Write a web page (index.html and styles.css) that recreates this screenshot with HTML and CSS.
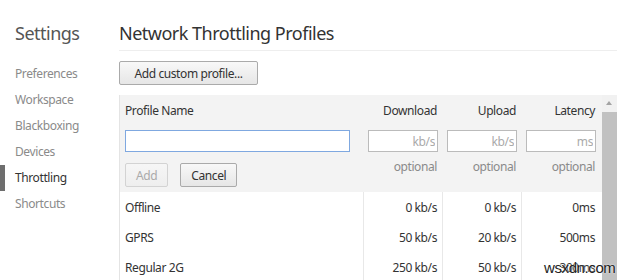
FILE: index.html
```html
<!DOCTYPE html>
<html lang="en">
<head>
  <meta charset="utf-8" />
  <title>Settings - Throttling</title>
  <link rel="stylesheet" href="styles.css">
</head>
<body>
  <div class="page">
    <aside class="sidebar">
      <h1 class="side-title">Settings</h1>
      <ul class="nav">
        <li>Preferences</li>
        <li>Workspace</li>
        <li>Blackboxing</li>
        <li>Devices</li>
        <li class="active">Throttling</li>
        <li>Shortcuts</li>
      </ul>
    </aside>

    <main class="panel">
      <h2 class="panel-title">Network Throttling Profiles</h2>
      <button class="btn add-btn">Add custom profile...</button>

      <div class="list-wrap">
        <div class="list">
          <div class="row head">
            <div class="cell name">Profile Name</div>
            <div class="cell num">Download</div>
            <div class="cell num">Upload</div>
            <div class="cell num">Latency</div>
          </div>

          <div class="editor">
            <div class="row edit-inputs">
              <div class="cell name"><input class="field name-field" type="text"></div>
              <div class="cell num"><input class="field num-field" type="text" placeholder="kb/s"></div>
              <div class="cell num"><input class="field num-field" type="text" placeholder="kb/s"></div>
              <div class="cell num"><input class="field num-field" type="text" placeholder="ms"></div>
            </div>
            <div class="row edit-hints">
              <div class="cell name buttons">
                <button class="btn small" disabled>Add</button>
                <button class="btn small">Cancel</button>
              </div>
              <div class="cell num hint">optional</div>
              <div class="cell num hint">optional</div>
              <div class="cell num hint">optional</div>
            </div>
          </div>

          <div class="row item">
            <div class="cell name">Offline</div>
            <div class="cell num">0 kb/s</div>
            <div class="cell num">0 kb/s</div>
            <div class="cell num">0ms</div>
          </div>
          <div class="row item">
            <div class="cell name">GPRS</div>
            <div class="cell num">50 kb/s</div>
            <div class="cell num">20 kb/s</div>
            <div class="cell num">500ms</div>
          </div>
          <div class="row item">
            <div class="cell name">Regular 2G</div>
            <div class="cell num">250 kb/s</div>
            <div class="cell num">50 kb/s</div>
            <div class="cell num">300ms</div>
          </div>
        </div>

        <div class="scrollbar">
          <div class="arrow"></div>
          <div class="thumb"></div>
        </div>
      </div>
    </main>
  </div>
  <div class="watermark">wsxdn.com</div>
</body>
</html>
```

FILE: styles.css
```css
body {
  margin: 0;
  font-family: "Noto Sans", "Open Sans", sans-serif;
  font-size: 12px;
  letter-spacing: -0.4px;
  color: #333;
  background: #fff;
  height: 280px;
  overflow: hidden;
}

.page {
  display: flex;
  height: 280px;
}

.sidebar {
  width: 119px;
  flex: none;
}

.side-title {
  margin: 0;
  padding: 21px 0 0 15px;
  font-size: 18px;
  font-weight: 400;
  line-height: 24px;
  letter-spacing: -0.5px;
  color: #555;
}

.nav {
  list-style: none;
  margin: 16px 0 0;
  padding: 0;
}

.nav li {
  height: 26px;
  line-height: 26px;
  padding-left: 15px;
  color: #8a8a8a;
  position: relative;
}

.nav .active {
  color: #333;
}

.nav .active::before {
  content: "";
  position: absolute;
  left: 0;
  top: 0;
  width: 5px;
  height: 26px;
  background: #6e6e6e;
}

.panel {
  flex: 1;
  min-width: 0;
}

.panel-title {
  margin: 0;
  padding: 21px 0 5px;
  font-size: 18px;
  font-weight: 400;
  line-height: 24px;
  letter-spacing: -0.5px;
  color: #333;
  border-bottom: 1px solid #eee;
}

.btn {
  font-family: inherit;
  font-size: 12px;
  letter-spacing: -0.4px;
  color: #333;
  background: linear-gradient(#f8f8f8, #e6e6e6);
  border: 1px solid #aaa;
  border-radius: 2px;
  padding: 0 15px;
  height: 24px;
}

.btn:disabled {
  color: #aaa;
  border-color: #d3d3d3;
  background: linear-gradient(#f6f6f6, #eee);
}

.add-btn {
  margin-top: 10px;
  display: block;
  width: 139px;
  padding: 0;
}

.list-wrap {
  display: flex;
  margin-top: 10px;
  height: 185px;
}

.list {
  width: 483px;
  flex: none;
  border-left: 1px solid #e4e4e4;
  box-sizing: border-box;
}

.row {
  display: grid;
  grid-template-columns: 243px 79px 79px 81px;
}

.cell {
  padding: 0 5px;
  white-space: nowrap;
}

.row .cell:last-child {
  padding-right: 7px;
}

.num {
  text-align: right;
}

.head {
  background: #f3f3f3;
  height: 29px;
  line-height: 31px;
}

.editor {
  background: #f3f3f3;
  padding-bottom: 5px;
}

.edit-inputs {
  height: 34px;
}

.field {
  box-sizing: border-box;
  height: 22px;
  border: 1px solid #bbb;
  background: #fff;
  font-family: inherit;
  font-size: 12px;
  letter-spacing: -0.4px;
  text-align: right;
  padding: 0 2px;
  margin-top: 6px;
}

.field::placeholder {
  color: #aaa;
}

.name-field {
  width: 225px;
  border-color: #7fa8e0;
  text-align: left;
}

.num-field {
  width: 70px;
  margin-right: -1px;
}

.edit-hints {
  height: 29px;
}

.hint {
  color: #8a8a8a;
  line-height: 14px;
  padding-top: 2px;
}

.buttons {
  display: flex;
  gap: 12px;
  padding-top: 5px;
}

.small {
  height: 24px;
  padding: 0 10px;
}

.item {
  height: 30px;
  line-height: 32px;
}

.item .cell + .cell {
  border-left: 1px solid #e8e8e8;
}

.scrollbar {
  width: 15px;
  flex: none;
  display: flex;
  flex-direction: column;
  background: #f1f1f1;
}

.arrow {
  height: 17px;
  position: relative;
}

.arrow::before {
  content: "";
  position: absolute;
  left: 4px;
  top: 6px;
  border-left: 3px solid transparent;
  border-right: 3px solid transparent;
  border-bottom: 4px solid #a3a3a3;
}

.thumb {
  flex: 1;
  background: #c1c1c1;
}

.watermark {
  position: absolute;
  left: 544px;
  top: 259px;
  font-family: "Liberation Sans", sans-serif;
  font-size: 15px;
  color: #222;
  text-shadow: 0 0 2px #fff;
}
```
